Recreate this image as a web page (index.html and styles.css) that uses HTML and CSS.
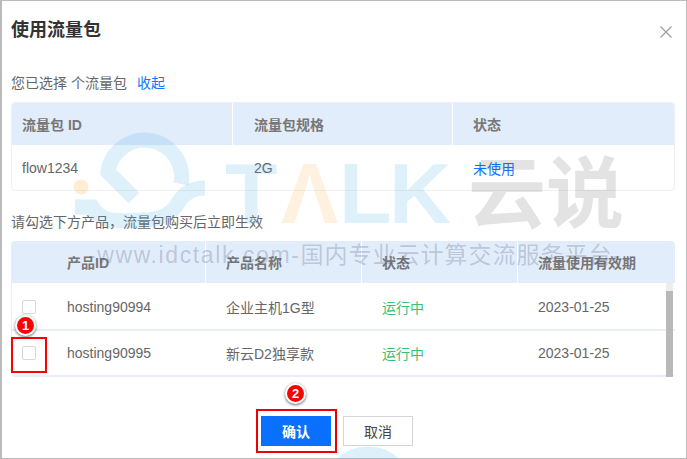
FILE: index.html
```html
<!DOCTYPE html>
<html lang="zh-CN">
<head>
<meta charset="utf-8">
<title>使用流量包</title>
<link rel="stylesheet" href="styles.css">
</head>
<body>
<div class="dialog">
  <header class="head">
    <h1 class="title">使用流量包</h1>
    <svg class="close" width="14" height="14" viewBox="0 0 14 14"><path d="M1.500 1.500 12.500 12.500M12.500 1.500 1.500 12.500"/></svg>
  </header>
  <p class="line first">您已选择 个流量包<a class="link">收起</a></p>
  <div class="table-box">
    <div class="row hd t1"><div>流量包 ID</div><div>流量包规格</div><div>状态</div></div>
    <div class="row bd1 t1"><div>flow1234</div><div>2G</div><div class="blue">未使用</div></div>
  </div>
  <p class="line second">请勾选下方产品，流量包购买后立即生效</p>
  <div class="table-box open">
    <div class="row hd t2"><div></div><div>产品ID</div><div>产品名称</div><div>状态</div><div>流量使用有效期</div></div>
    <div class="rows">
      <div class="row bd t2"><div><span class="check"></span></div><div>hosting90994</div><div>企业主机1G型</div><div class="green">运行中</div><div>2023-01-25</div></div>
      <div class="row bd t2"><div><span class="check"></span></div><div>hosting90995</div><div>新云D2独享款</div><div class="green">运行中</div><div>2023-01-25</div></div>
      <div class="scroll"><div class="thumb"></div></div>
    </div>
  </div>
  <footer class="foot">
    <button class="btn primary">确认</button>
    <button class="btn">取消</button>
  </footer>
</div>

<svg class="mark" width="687" height="459" viewBox="0 0 687 459">
  <path class="ring" d="M134 198 108 172A37 37 0 1 1 181 184"/>
  <path class="ring" d="M75 207H92C104 226 124 220 142 220C160 220 172 214 178 203C183 194 192 188 205 188"/>
  <path class="ring" d="M330 492A37 37 0 0 1 406 492"/>
  <circle class="dot" cx="81" cy="187" r="7.500"/>
  <text class="wm-letter blue-l" x="225" y="223">T</text>
  <text class="wm-letter orange-l" x="281" y="223">Λ</text>
  <text class="wm-letter blue-l" x="339" y="223">L</text>
  <text class="wm-letter blue-l" x="389" y="223">K</text>
  <text class="wm-cn" x="468" y="222">云说</text>
  <text class="wm-line" x="88" y="263"><tspan class="wm-latin">-www.idctalk.com-</tspan>国内专业云计算交流服务平台-</text>
</svg>

<div class="anno box1"></div>
<div class="anno box2"></div>
<div class="anno badge b1">1</div>
<div class="anno badge b2">2</div>
</body>
</html>
```
FILE: styles.css
```css
* { box-sizing: border-box; }
html, body { margin: 0; padding: 0; }
body {
  width: 687px; height: 459px; overflow: hidden; position: relative; background: #fff;
  font-family: "Liberation Sans", "Noto Sans CJK SC", sans-serif; font-size: 14px; color: #666;
}
.dialog {
  width: 687px; height: 459px; border: 1px solid #bbb; border-left-width: 2px;
  padding: 0 11px 0 9px; display: flex; flex-direction: column;
}
.head { display: flex; justify-content: space-between; align-items: center; height: 53px; padding-right: 2px; }
.title { margin: 0; font-size: 18px; font-weight: 700; color: #333; }
.close { margin-top: 9px; }
.close path { stroke: #999; stroke-width: 1.100; fill: none; }
.line { margin: 0; line-height: 20px; }
.first { margin-top: 19px; height: 29px; }
.link { color: #0a78ff; margin-left: 10px; }
.second { margin-top: 21px; height: 29px; }
.table-box { width: 664px; border: 1px solid #edf0f5; border-radius: 4px; overflow: hidden; }
.table-box.open { border-width: 0 0 0 1px; border-left-color: #e8eef8; }
.row { display: grid; align-items: center; }
.t1 { grid-template-columns: 221px 220px 1fr; }
.t1 > div { padding-left: 20px; }
.t1 > div:first-child { padding-left: 10px; }
.t1 > div:nth-child(2) { padding-left: 21px; }
.t2 { grid-template-columns: 55px 139px 156px 156px 1fr; }
.t2 > div:first-child { padding-left: 10px; }
.t2 > div:nth-child(n+3) { padding-left: 20px; }
.hd { height: 42px; background: #e2edfc; font-weight: 700; color: #777; align-items: stretch; }
.hd > div { display: flex; align-items: center; border-right: 1px solid #fff; }
.hd > div:last-child, .hd.t2 > div:first-child { border-right: 0; }
.bd1 { height: 45px; }
.bd { height: 46px; border-bottom: 2px solid #e9edf6; }
.blue { color: #0a78ff; }
.green { color: #3fc06f; }
.rows { position: relative; padding-top: 2px; }
.check { display: block; width: 14px; height: 14px; border: 1px solid #d8d8d8; border-radius: 2px; background: #fff; }
.scroll { position: absolute; right: 2px; top: 0; bottom: 0; width: 7px; background: #ededf0; }
.thumb { margin-top: 8px; height: 86px; background: #b9b9b9; }
.foot { display: flex; gap: 12px; margin-top: 39px; padding-left: 250px; }
.btn { width: 70px; height: 30px; border: 1px solid #d6d6d6; background: #fff; color: #444; font: inherit; padding: 0; }
.btn.primary { background: #0a70ff; border-color: #0a70ff; color: #fff; font-weight: 700; }

.mark { position: absolute; left: 0; top: 0; pointer-events: none; }
.ring { fill: none; stroke: rgba(70, 170, 225, .18); stroke-width: 15; }
.dot { fill: rgba(250, 170, 60, .22); }
.wm-letter { font: 700 86px "Liberation Sans", sans-serif; }
.blue-l { fill: rgba(70, 170, 225, .18); }
.orange-l { fill: rgba(250, 170, 60, .16); }
.wm-cn { font: 700 78px "Noto Sans CJK SC", sans-serif; fill: rgba(60, 60, 60, .14); }
.wm-line { font: 400 23px "Liberation Sans", "Noto Sans CJK SC", sans-serif; letter-spacing: 1px; fill: rgba(50, 70, 100, .24); }
.wm-latin { letter-spacing: 1.600px; }

.anno { position: absolute; }
.box1 { left: 11px; top: 337px; width: 36px; height: 36px; border: 2px solid #f00; }
.box2 { left: 256px; top: 409px; width: 81px; height: 44px; border: 2px solid #e00; }
.badge {
  width: 21px; height: 21px; border-radius: 50%; background: #f00; border: 2px solid #fff;
  box-shadow: 0 1px 3px rgba(0,0,0,.6); color: #fff; font-size: 13px; font-weight: 700;
  text-align: center; line-height: 17px;
}
.b1 { left: 15px; top: 315px; }
.b2 { left: 285px; top: 383px; }
```
